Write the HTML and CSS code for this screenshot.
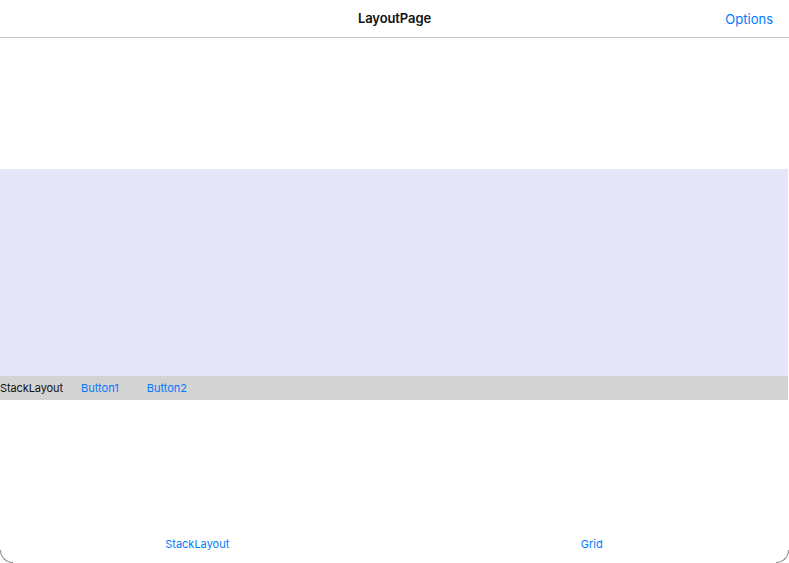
FILE: index.html
```html
<!DOCTYPE html>
<html>
<head>
<meta charset="utf-8">
<link rel="stylesheet" href="styles.css">
</head>
<body>
<div class="screen">
  <header class="navbar">
    <div class="nav-title">LayoutPage</div>
    <div class="nav-action">Options</div>
  </header>
  <main class="content">
    <div class="spacer"></div>
    <div class="lavender"></div>
    <div class="stack">
      <span class="stack-label">StackLayout</span>
      <span class="btn">Button1</span>
      <span class="btn">Button2</span>
    </div>
  </main>
  <nav class="tabbar">
    <div class="tab">StackLayout</div>
    <div class="tab">Grid</div>
  </nav>
  <div class="corner corner-left"></div>
  <div class="corner corner-right"></div>
</div>
</body>
</html>
```
FILE: styles.css
```css
* { box-sizing: border-box; }
html, body { margin: 0; padding: 0; background: #fff; }
body {
  font-family: Inter, "Noto Sans", "Liberation Sans", sans-serif;
  -webkit-font-smoothing: antialiased;
}
.screen {
  position: relative;
  width: 789px;
  height: 563px;
  display: flex;
  flex-direction: column;
  overflow: hidden;
}
.navbar {
  position: relative;
  height: 38px;
  flex: 0 0 38px;
  border-bottom: 1px solid #c6c6c8;
  display: flex;
  align-items: center;
  justify-content: center;
  padding-bottom: 1px;
}
.nav-title {
  font-size: 13px;
  font-weight: 600;
  color: #111;
  letter-spacing: -0.1px;
}
.nav-action {
  position: absolute;
  right: 16px;
  top: 0;
  height: 37px;
  display: flex;
  align-items: center;
  font-size: 13px;
  color: #007aff;
}
.content {
  flex: 1;
  display: flex;
  flex-direction: column;
}
.spacer { height: 131px; }
.lavender { height: 207px; background: #e6e6fa; margin-right: 1px; }
.stack {
  height: 24px;
  background: #d3d3d3;
  display: flex;
  align-items: center;
  gap: 8px;
  font-size: 11px;
  margin-right: 1px;
}
.stack-label { color: #111; letter-spacing: -0.1px; }
.btn { color: #007aff; padding: 0 10px; }
.tabbar {
  height: 50px;
  flex: 0 0 50px;
  display: flex;
  align-items: center;
  padding-top: 12px;
}
.tab {
  flex: 1;
  text-align: center;
  font-size: 11px;
  color: #007aff;
}
.corner {
  position: absolute;
  bottom: 0;
  width: 13px;
  height: 13px;
  border-bottom: 1px solid #8a8a8a;
}
.corner-left {
  left: 0;
  border-left: 1px solid #8a8a8a;
  border-bottom-left-radius: 13px;
}
.corner-right {
  right: 0;
  border-right: 1px solid #8a8a8a;
  border-bottom-right-radius: 13px;
}
```
